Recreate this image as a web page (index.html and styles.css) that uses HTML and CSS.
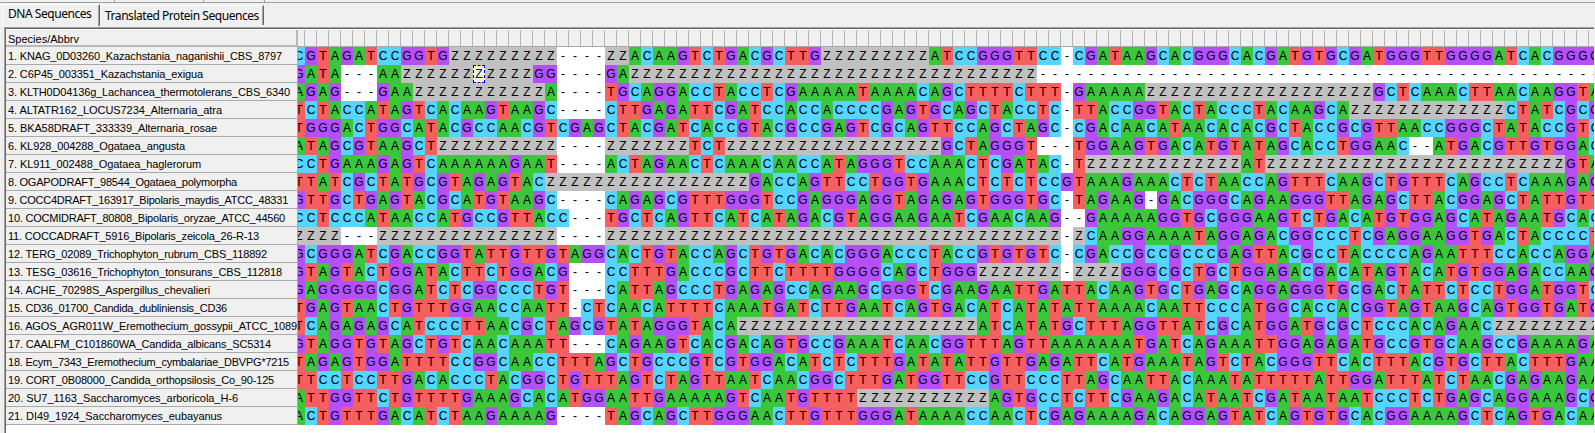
FILE: index.html
```
<!DOCTYPE html>
<html lang="en">
<head>
<meta charset="utf-8">
<title>Alignment Explorer</title>
<link rel="stylesheet" href="styles.css">
</head>
<body>
<div class="toolbar-edge"><i></i><i></i><i></i></div>
<nav class="tabs">
  <div class="tab active">DNA Sequences</div>
  <div class="tab">Translated Protein Sequences</div>
</nav>
<main class="panel">
  <section class="names" id="names"><div class="names-head">Species/Abbrv</div></section>
  <section class="grid"><div class="ruler" id="ruler"></div><div id="rows"></div></section>
</main>
<script src="app.js"></script>
</body>
</html>
```
FILE: styles.css
```
* { box-sizing: border-box; }
body {
  margin: 0;
  width: 1595px;
  height: 433px;
  overflow: hidden;
  display: flex;
  flex-direction: column;
  background: #f0f0f0;
  color: #000;
  font-family: "Liberation Sans", Arial, sans-serif;
}
.toolbar-edge {
  height: 3px;
  flex: none;
  display: flex;
  border-bottom: 1px solid #a0a0a0;
}
.toolbar-edge i { width: 1px; background: #a0a0a0; }
.toolbar-edge i:nth-child(1) { margin-left: 114px; }
.toolbar-edge i:nth-child(2) { margin-left: 88px; }
.toolbar-edge i:nth-child(3) { margin-left: 60px; }
.tabs {
  height: 24px;
  flex: none;
  display: flex;
  align-items: flex-end;
  padding-left: 2px;
  font-family: "Noto Sans", sans-serif;
  font-size: 12px;
  letter-spacing: -0.46px;
}
.tab {
  height: 20px;
  width: 164px;
  margin-bottom: 2px;
  padding-left: 5px;
  line-height: 20px;
  white-space: nowrap;
  border-top: 1px solid #fff;
  border-right: 1px solid #696969;
  box-shadow: inset -1px 0 #a0a0a0;
}
.tab.active {
  height: 22px;
  width: 98px;
  margin-bottom: 1px;
  padding-left: 5px;
  line-height: 18px;
  border-left: 1px solid #fff;
}
.panel {
  flex: 1;
  margin-left: 4px;
  margin-right: 1px;
  display: flex;
  background: #fff;
  border-left: 1px solid #a0a0a0;
  border-top: 1px solid #a0a0a0;
  box-shadow: inset 1px 1px #696969;
  padding: 2px 0 0 1px;
  min-height: 0;
}
.names { width: 292px; flex: none; font-size: 11px; }
.names-head {
  height: 17px;
  line-height: 18px;
  padding-left: 2px;
  background: #f0f0f0;
  border-right: 2px solid #b8b8b8;
  border-bottom: 2px solid #b8b8b8;
}
.name {
  height: 18px;
  line-height: 18px;
  padding-left: 2px;
  background: #f0f0f0;
  border-right: 1px solid #a9a9a9;
  border-bottom: 1px solid #a9a9a9;
  white-space: nowrap;
}
.grid { flex: 1; overflow: hidden; min-width: 0; }
.ruler, .row {
  display: flex;
  width: 1308px;
  margin-left: -5px;
}
.ruler { height: 17px; background: #f0f0f0; border-bottom: 1px solid #a9a9a9; }
.ruler i { width: 12px; border-right: 1px solid #b4b4b4; }
.row { height: 18px; font-size: 12px; line-height: 19px; }
.row b { width: 12px; text-align: center; font-weight: normal; }
.A { background: #3bc63b; }
.C { background: #55d5ff; }
.G { background: #b54ffa; }
.T { background: #f55f5f; }
.Z { background: #c0c0c0; }
.gap { background: #fff; }
.row .cursor { background: #f8f4c0; color: #00f; outline: 1px dashed #0000d0; outline-offset: -1px; }
```
FILE: app.js
```
// [label, drawn width in pixels]
const names = [
  ["KNAG_0D03260_Kazachstania_naganishii_CBS_8797", 274], ["C6P45_003351_Kazachstania_exigua", 195],
  ["KLTH0D04136g_Lachancea_thermotolerans_CBS_6340", 282], ["ALTATR162_LOCUS7234_Alternaria_atra", 214],
  ["BKA58DRAFT_333339_Alternaria_rosae", 209], ["KL928_004288_Ogataea_angusta", 177],
  ["KL911_002488_Ogataea_haglerorum", 193], ["OGAPODRAFT_98544_Ogataea_polymorpha", 229],
  ["COCC4DRAFT_163917_Bipolaris_maydis_ATCC_48331", 280], ["COCMIDRAFT_80808_Bipolaris_oryzae_ATCC_44560", 277],
  ["COCCADRAFT_5916_Bipolaris_zeicola_26-R-13", 251], ["TERG_02089_Trichophyton_rubrum_CBS_118892", 259],
  ["TESG_03616_Trichophyton_tonsurans_CBS_112818", 274], ["ACHE_70298S_Aspergillus_chevalieri", 202],
  ["CD36_01700_Candida_dubliniensis_CD36", 219], ["AGOS_AGR011W_Eremothecium_gossypii_ATCC_1089", 289],
  ["CAALFM_C101860WA_Candida_albicans_SC5314", 263], ["Ecym_7343_Eremothecium_cymbalariae_DBVPG*7215", 281],
  ["CORT_0B08000_Candida_orthopsilosis_Co_90-125", 266], ["SU7_1163_Saccharomyces_arboricola_H-6", 230],
  ["DI49_1924_Saccharomyces_eubayanus", 214]
];
const z = n => "Z".repeat(n), d = n => "-".repeat(n);
const seqs = [
  ["CGTAGATCCGGTG" + z(9), "----ZZACAAGTCTGACGCTTG", z(9) + "ATCCGGGTTCC-", "CGATAAGCACGGGCACGATGTG", "CGATGGGTTGGGGATCACGGGG"],
  ["GATA---AA" + z(11) + "GG", "----GA" + z(16), z(18) + "---", d(22), d(22)],
  ["AGAG---GAA" + z(11) + "A", "----TGCAGGACCTACCTCGAA", "AAATAAAACAGCTTTTCTTT-", "GAAAAA" + z(16), "ZZZGCTCAAACTTAACAAGGTA"],
  ["TCTACCATAGTCACAAGTAAGC", "----CTTGAGATTCGATCCACC", "ACCCCGAGTGCAGCTACCTC-", "TTACCGGTACTACCCTACAAGC", "A" + z(13) + "CTATCGCG"],
  ["TGGGACTGGCATACGCCAACGT", "CGAGCTACGATCACCGTACGCC", "GAGTCGCAGTTCCAGCTAGC-", "CGACAACATAACACACGCTACC", "GCGTTAACCGGGCTATACCGTC"],
  ["ATAGCGTAAGCT" + z(10), "----" + z(7) + "TCT" + z(8), z(10) + "GCTAGGGT---", "TGGAAGTGACATGTATAGCACC", "TGGAAC--ATGACGTTGTGGAC"],
  ["CCTGAAAGAGTCAAAAAAGAAT", "----ACTAGAACTCAAACAACC", "ATAGGGTCCAAACTCGATAC-", "T" + z(13) + "AT" + z(6), z(19) + "GTA"],
  ["TTATCGCTATGCGTAGAGTACZ", z(16) + "GACCAG", "TTCCTGGTGAAACTCTCTCCG", "TAAAGAAACTCTAACCAGTTTC", "AAGCTGTTTCAGCCTCAAAGAG"],
  ["GTTGCTGAGTACGCATGTAAGC", "----CAGAGCGTTTGGGTCCGA", "GGGAGGTAGAGAGTGGGTGC-", "TAGAAG-GACGGGCAGAAGGGT", "TAGAGCTTACGGAGCTATTGTT"],
  ["CCTCCCATAACCATGCCGTTAC", "C---TGCTCAGTTCATCATAGA", "CGTAGGAAGAATCGAACAAG-", "-GAAAAAGGTGCGGGAAGTCTG", "ACATGTGGAGCATAGAATGCAC"],
  ["ZZZZ---" + z(15), "----" + z(18), z(20) + "-", "ZCAAGGAAAATAGGAGACGGCC", "CTCGAGGAAGGTGACTACCCCT"],
  ["GCGGGATCGACCGGTATTGTTG", "TAGGCACTGTACCAGCTGTGAC", "ACGGGACCCTACCGTGTGTC-", "CGACCGCCGCCCGAGTTACGCC", "TACCCCAGAATTTCCACCAGGA"],
  ["GTAGTACTGGATACTTCTGGAC", "G---CCTTTGACCCGCTTCTTT", "TGGGGCAGCTGGG" + z(7) + "-", "ZZZZGGGCGCTGCTGGAGACGA", "CATAGTACATGTGGAGACCAAG"],
  ["GAGGGGGCGGATCTCGGCCCTG", "T---CATTAGCCCTGAGAGCCA", "GAAGCGGGTCGAAGAATTGAT", "TACAAGTGCTGAGCAGGAGGGT", "GCGACTATTCTCCTGGATGGTC"],
  ["TGAGTAACTGTTTGGAACCAAT", "T-CTCAACATTTTCAAATGATC", "TTGAATCAGTGACATCATATA", "TTAAAACAATTCCCATGGCACC", "ACGGTAGTAAGCAGTGGTGATG"],
  ["TCAGAGAGCATCCCTTAACGCT", "AGCGTATAGGGTACA" + z(7), z(13) + "ATCATATG", "CTTTAGGTTATCGCATGGATGC", "GCTCCCACAGAAC" + z(9)],
  ["GTAGGTGTAGCTGTCAACAAAT", "T---CAGAAGTCACGACAGTGC", "CGAAATCAACGGTTTAGTTAA", "AAAAATGATCAGAAATTGGAGA", "GATGCCGTGCAAGCCGAAAAGA"],
  ["TAGAGTGGATTTTCCGGCAACC", "TTTAGCTGCCCGTCGTGGACAT", "CTCTTTGATATATTGTTGAGA", "TTCATGAAATAGTCTACGGGTT", "CACTTTACGTGCTTACTTTGAA"],
  ["TTCCTCCTTGACACCCTACGGC", "TGTTTAGTCTAGTTAATCAACG", "GCTTTGATGGTTCCGTTCCCT", "TAGCAATTACAAATATTTTTAT", "TGGATTTATCTAACGAGAAGAA"],
  ["ATTGGTTCTGTTTTGAAAGCAC", "ATGGAATTGAAAAAGTCAATGT", "TTT" + z(11) + "AGTGCCT", "CTTCGAAGACATAATCGATAAT", "AATCCCTCTGAGCAGGAAAGCG"],
  ["ACTGTTTGACATCTAAGAAAAG", "----TAGCAGCTTGGGAACTTG", "TTTGGGATAAAACCAACTCGA", "GAAAAGACAGGAGTATCAGTGT", "GCACGGAAAAGCTCAGTGACAA"]
];
const cursor = { row: 1, col: 15 };
const add = (parent, tag, cls, text) => {
  const el = document.createElement(tag);
  if (cls) el.className = cls;
  if (text) el.textContent = text;
  return parent.appendChild(el);
};
names.forEach(([n, width], i) => {
  const label = `${i + 1}. ${n}`;
  const span = add(add(document.getElementById("names"), "div", "name"), "span", "", label);
  const spacing = (width - span.getBoundingClientRect().width) / label.length;
  span.style.letterSpacing = spacing.toFixed(3) + "px";
});
for (let i = 0; i < 109; i++) add(document.getElementById("ruler"), "i");
seqs.forEach((parts, r) => {
  const row = add(document.getElementById("rows"), "div", "row");
  [...parts.join("")].forEach((ch, c) => {
    const cls = ch === "-" ? "gap" : ch;
    add(row, "b", r === cursor.row && c === cursor.col ? cls + " cursor" : cls, ch);
  });
});
```
